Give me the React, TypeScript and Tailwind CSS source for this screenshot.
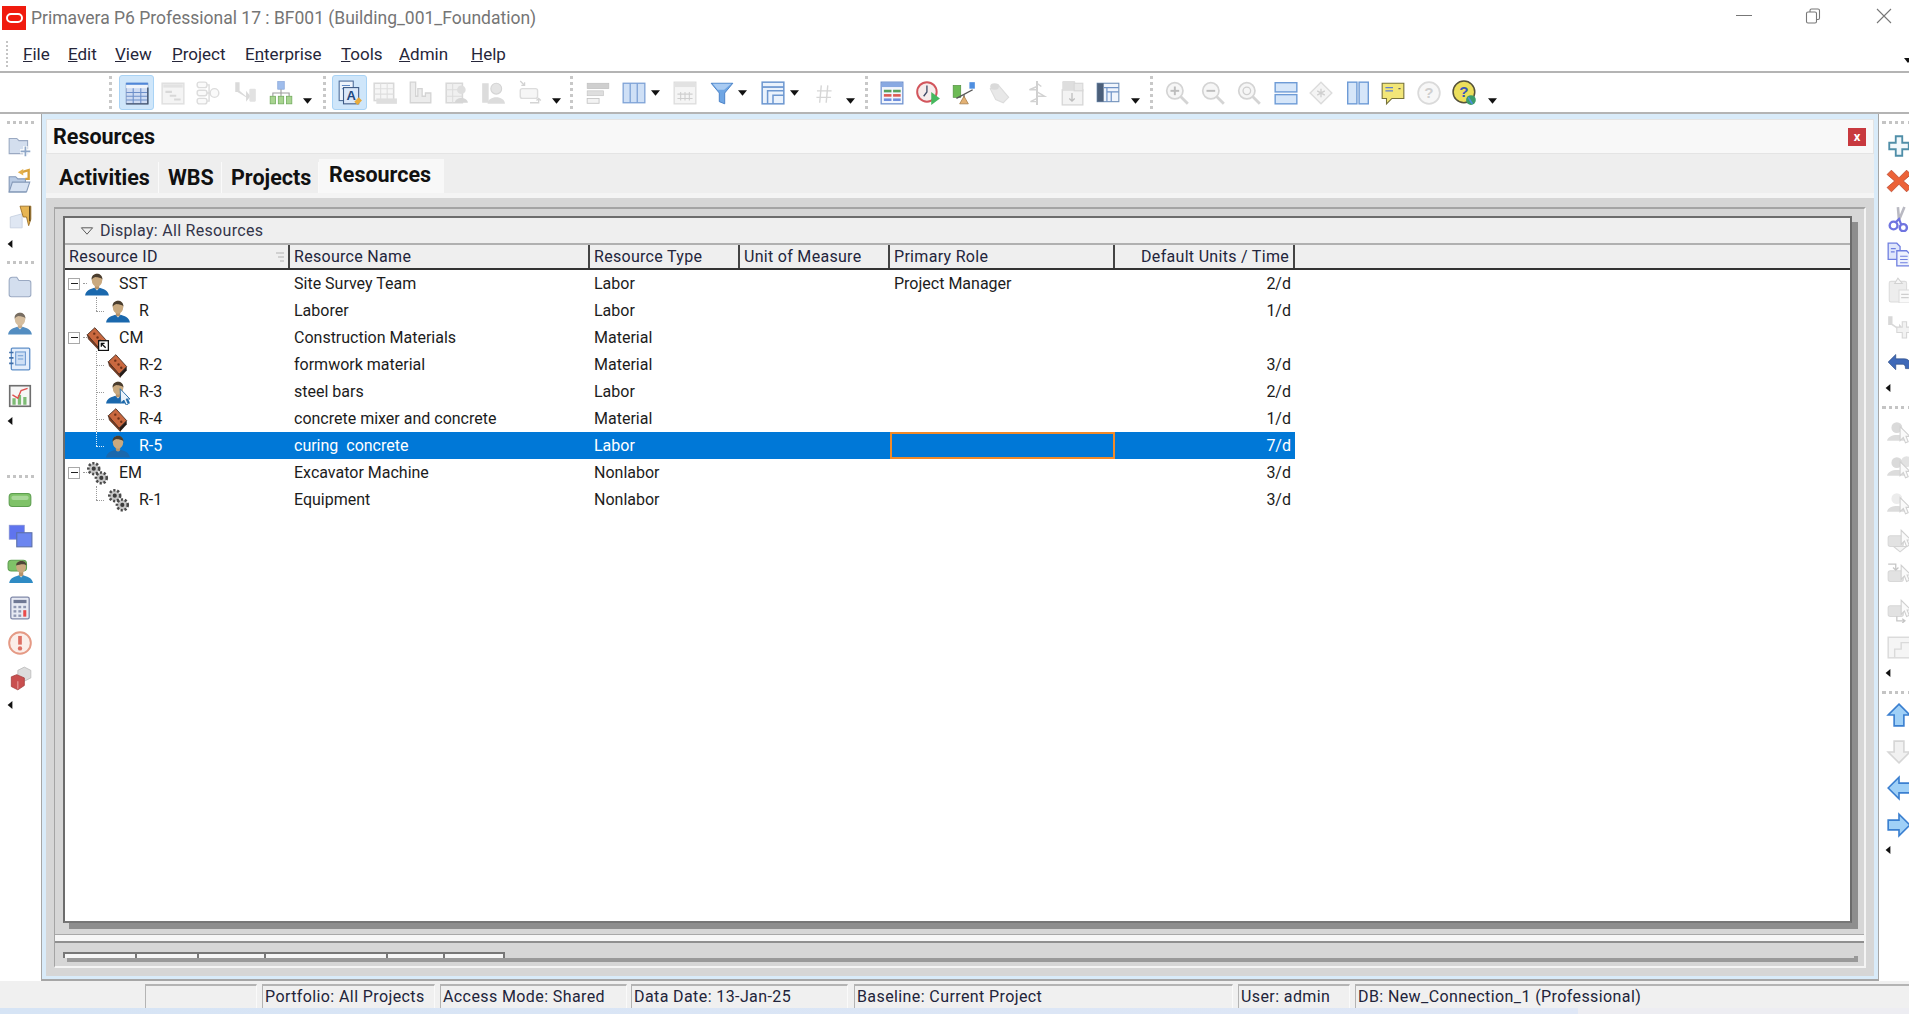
import type { ReactNode } from 'react'

const Ic = ({ children }: { children: ReactNode }) => (
  <svg viewBox="0 0 24 24" className="block h-[26px] w-[26px] shrink-0">
    {children}
  </svg>
)

// tree + sidebar icons
const Person = () => (
  <Ic>
    <rect x="10" y="12" width="4" height="5" fill="#b8946a" />
    <ellipse cx="12" cy="8.5" rx="4.8" ry="6" fill="#c9a97f" />
    <path d="M7.1 8C6 1.5 17 0 17.1 8 15.5 5.5 13 6.5 11 5.5 9.5 5.5 8.2 6.5 7.1 8Z" fill="#4a3d2e" />
    <path d="M1 22.5C1.5 18 6.5 16.5 9.5 15.5L12 18 14.5 15.5C17.5 16.5 22.5 18 23 22.5Z" fill="#1a68ad" />
  </Ic>
)
const PersonCursor = () => (
  <Ic>
    <rect x="10" y="12" width="4" height="5" fill="#b8946a" />
    <ellipse cx="12" cy="8.5" rx="4.8" ry="6" fill="#c9a97f" />
    <path d="M7.1 8C6 1.5 17 0 17.1 8 15.5 5.5 13 6.5 11 5.5 9.5 5.5 8.2 6.5 7.1 8Z" fill="#4a3d2e" />
    <path d="M1 22.5C1.5 18 6.5 16.5 9.5 15.5L12 18 14.5 15.5C17.5 16.5 22.5 18 23 22.5Z" fill="#1a68ad" />
    <path d="M14 9L23 18.5H19.5L21.5 23 19.5 24 17.5 19.5 14.5 22Z" fill="#eaf3fb" stroke="#2a6fa8" strokeWidth="0.9" />
  </Ic>
)
const Brick = ({ link }: { link?: boolean }) => (
  <Ic>
    <path d="M3 9L10 2.5 20 13.5 13 20.5Z" fill="#c9683f" stroke="#40261a" strokeWidth="0.8" />
    <path d="M13 20.5L20 13.5V17L14 23.5Z" fill="#241a16" />
    <path d="M3 9L13 20.5 14 23.5 4 13Z" fill="#7a3c20" stroke="#40261a" strokeWidth="0.5" />
    <circle cx="9.5" cy="8" r="1.1" fill="#6f3218" />
    <circle cx="12.5" cy="11.5" r="1.1" fill="#6f3218" />
    <circle cx="15" cy="14.5" r="1.1" fill="#6f3218" />
    {link && (
      <g>
        <rect x="13.5" y="14.5" width="9" height="9" fill="#fff" stroke="#111" strokeWidth="1.2" />
        <path d="M20 21L16 17M16 20V17H19" fill="none" stroke="#111" strokeWidth="1.2" />
      </g>
    )}
  </Ic>
)
const Gears = () => (
  <Ic>
    <g fill="#c6c6c6" stroke="#4a4a4a">
      <circle cx="9" cy="8" r="5" strokeWidth="2.4" strokeDasharray="2 1.6" />
      <circle cx="16" cy="16.5" r="5" strokeWidth="2.4" strokeDasharray="2 1.6" />
    </g>
    <circle cx="9" cy="8" r="1.9" fill="#3c3c3c" />
    <circle cx="16" cy="16.5" r="1.9" fill="#3c3c3c" />
  </Ic>
)

// top toolbar
const TableOn = () => (
  <Ic>
    <rect x="2" y="3" width="20" height="19" fill="#cfdcf3" stroke="#7d93bd" strokeWidth="0.8" />
    <rect x="2" y="2.5" width="20" height="2" fill="#4f86d8" />
    <rect x="2" y="4.5" width="20" height="3" fill="#eef3fb" />
    <path d="M2 11.5H22M2 15H22M2 18.5H22M8.5 7.5V22M15.5 7.5V22" stroke="#6d8fc9" strokeWidth="1" />
    <path d="M2 22H22V7" fill="none" stroke="#46566f" strokeWidth="1.3" />
  </Ic>
)
const GanttOff = () => (
  <Ic>
    <rect x="2" y="3" width="20" height="19" fill="#f4f4f4" stroke="#e0e0e0" strokeWidth="1.4" />
    <rect x="3" y="4" width="18" height="3" fill="#e2e2e2" />
    <path d="M5 11H11M9 14.5H15M13 18H19" stroke="#d8d8d8" strokeWidth="2" />
  </Ic>
)
const NodesOff = () => (
  <Ic>
    <g fill="#fafafa" stroke="#dcdcdc" strokeWidth="1.3">
      <rect x="2" y="2" width="9" height="5" rx="2" />
      <rect x="2" y="9.5" width="9" height="5" rx="2" />
      <rect x="2" y="17" width="9" height="5" rx="2" />
      <circle cx="18" cy="12" r="4" />
      <path d="M11 4.5H13V19.5H11M11 12H14" fill="none" />
    </g>
  </Ic>
)
const LinkOff = () => (
  <Ic>
    <path d="M3 2H7V10L13 15V10L17 15 13 20V16L5 11H3Z" fill="#dadada" />
    <rect x="16" y="8" width="6" height="12" rx="1" fill="#e2e2e2" />
  </Ic>
)
const Org = () => (
  <Ic>
    <rect x="9" y="1.5" width="6" height="7" fill="#9fbdec" stroke="#7f9fd6" strokeWidth="0.6" />
    <path d="M12 8.5V12M4.5 15V12H19.5V15M12 12V15" fill="none" stroke="#9c9c9c" />
    <g fill="#a8d490" stroke="#6fa95a" strokeWidth="0.7">
      <rect x="2" y="15" width="5" height="7" />
      <rect x="9.5" y="15" width="5" height="7" />
      <rect x="17" y="15" width="5" height="7" />
    </g>
  </Ic>
)
const DocA = () => (
  <Ic>
    <rect x="2" y="1" width="13" height="18" fill="#eef4fc" stroke="#4f6d99" />
    <path d="M4.5 5H12M4.5 8H8" stroke="#5f88c4" />
    <rect x="6" y="7" width="14" height="15" fill="#dbe8f9" stroke="#3d5a85" />
    <text x="13" y="18.5" textAnchor="middle" fontSize="12" fontWeight="700" fontFamily="Liberation Sans, sans-serif" fill="#21477e">A</text>
    <path d="M16 20L20 16 23 19 19 23Z" fill="#e8ab3a" />
  </Ic>
)
const PrintOff = () => (
  <Ic>
    <rect x="2" y="3" width="18" height="16" fill="#f6f6f6" stroke="#d8d8d8" strokeWidth="1.4" />
    <path d="M2 8H20M2 13H20M8 3V19M14 3V19" stroke="#dedede" />
    <rect x="4" y="17" width="19" height="5" fill="#dedede" />
  </Ic>
)
const BarsOff = () => (
  <Ic>
    <path d="M3 2H8V15H10V8H14V15H17V12H22V21H3Z" fill="#ececec" stroke="#d4d4d4" strokeWidth="1.2" />
  </Ic>
)
const TablePersonOff = () => (
  <Ic>
    <rect x="2" y="3" width="15" height="18" fill="#f0f0f0" stroke="#d8d8d8" strokeWidth="1.4" />
    <path d="M2 9H17M2 15H17M8 3V21" stroke="#dcdcdc" />
    <circle cx="16" cy="9" r="4" fill="#dedede" />
    <path d="M10 21C10 15 22 15 22 21Z" fill="#d6d6d6" />
  </Ic>
)
const BarPersonOff = () => (
  <Ic>
    <rect x="2" y="3" width="6" height="18" fill="#dcdcdc" />
    <circle cx="15" cy="8" r="5" fill="#e4e4e4" stroke="#d4d4d4" />
    <path d="M7 22C7 14 23 14 23 22Z" fill="#dcdcdc" />
  </Ic>
)
const BoxArrowsOff = () => (
  <Ic>
    <path d="M3 1L7 5M7 2V5H4" fill="none" stroke="#d2d2d2" strokeWidth="1.2" />
    <rect x="3" y="8" width="16" height="9" rx="2" fill="#f6f6f6" stroke="#dcdcdc" strokeWidth="1.3" />
    <path d="M12 21H20V17M18 19L20 17 22 19" fill="none" stroke="#d4d4d4" strokeWidth="1.2" />
  </Ic>
)
const Align = () => (
  <Ic>
    <rect x="2" y="3" width="20" height="5" fill="#cfcfcf" stroke="#bdbdbd" strokeWidth="0.6" />
    <rect x="2" y="10" width="15" height="4.5" fill="#dedede" stroke="#c4c4c4" strokeWidth="0.6" />
    <rect x="2" y="17" width="11" height="4.5" fill="#f3f3f3" stroke="#c4c4c4" strokeWidth="0.8" />
  </Ic>
)
const Columns = () => (
  <Ic>
    <rect x="2" y="3" width="20" height="18" fill="#cfe0f6" stroke="#7ea2d6" strokeWidth="1.2" />
    <path d="M8.5 3V21M15 3V21" stroke="#7ea2d6" strokeWidth="1.2" />
  </Ic>
)
const CalendarOff = () => (
  <Ic>
    <rect x="2" y="2" width="20" height="20" fill="#f5f5f5" stroke="#dcdcdc" strokeWidth="1.2" />
    <rect x="2.5" y="2.5" width="19" height="4" fill="#e2e2e2" />
    <path d="M5 13H19M5 17H19M8 11V19M12 11V19M16 11V19" stroke="#cfcfcf" />
  </Ic>
)
const Funnel = () => (
  <Ic>
    <path d="M2 3H22L14.5 12V22L9.5 20V12Z" fill="#6fa6e4" stroke="#3f78c2" strokeWidth="0.8" />
    <path d="M3.5 3.5H20.5L14 9H8Z" fill="#a9cbf2" />
  </Ic>
)
const Layers = () => (
  <Ic>
    <rect x="2" y="2" width="20" height="20" fill="#eaf2fc" stroke="#6d97d0" strokeWidth="1.4" />
    <path d="M2 6.5H22" stroke="#6d97d0" strokeWidth="1.6" />
    <path d="M7 22V10H22" fill="none" stroke="#6d97d0" strokeWidth="1.4" />
    <path d="M12 22V14H22" fill="none" stroke="#6d97d0" strokeWidth="1.4" />
  </Ic>
)
const HashOff = () => (
  <Ic>
    <path d="M9.5 5L8 21M15.5 5L14 21M5.5 10H19M5 16H18.5" stroke="#d6d6d6" strokeWidth="1.3" />
  </Ic>
)
const ColorTable = () => (
  <Ic>
    <rect x="2" y="2" width="20" height="20" fill="#f2f6fd" stroke="#6f92cf" strokeWidth="1.2" />
    <rect x="2.5" y="2.5" width="19" height="4" fill="#88a9e2" />
    <rect x="4.5" y="9" width="7" height="2.4" fill="#57a05a" />
    <rect x="13" y="9" width="7" height="2.4" fill="#57a05a" />
    <rect x="4.5" y="13" width="7" height="2.4" fill="#dc5a52" />
    <rect x="13" y="13" width="7" height="2.4" fill="#dc5a52" />
    <rect x="4.5" y="17" width="7" height="2.4" fill="#6f8fdc" />
    <rect x="13" y="17" width="7" height="2.4" fill="#6f8fdc" />
  </Ic>
)
const ClockPlay = () => (
  <Ic>
    <circle cx="11" cy="11" r="9" fill="#f6ecec" stroke="#d2555c" strokeWidth="1.8" />
    <path d="M11 5V11L8 15" fill="none" stroke="#3d4a66" strokeWidth="1.2" />
    <path d="M15 11L23 17 15 23Z" fill="#46b85e" />
  </Ic>
)
const Level = () => (
  <Ic>
    <rect x="2" y="5" width="7" height="11" fill="#6dbb55" stroke="#4f8d3d" strokeWidth="0.6" />
    <rect x="17" y="2" width="5" height="6" fill="#4f8fe0" />
    <path d="M5 17L20 9" stroke="#555" strokeWidth="1.3" />
    <path d="M12 13V18" stroke="#666" strokeWidth="1.3" />
    <path d="M8 22L12 15 16 22Z" fill="#e3b173" stroke="#a37a45" strokeWidth="0.7" />
  </Ic>
)
const CylOff = () => (
  <Ic>
    <path d="M3 8L10 4 20 16 15 21 8 18Z" fill="#e8e8e8" stroke="#dcdcdc" />
    <ellipse cx="7" cy="6" rx="4" ry="3" fill="#dadada" />
  </Ic>
)
const SpineOff = () => (
  <Ic>
    <path d="M12 1V23" stroke="#c9c9c9" strokeWidth="1.6" />
    <path d="M12 6L5 9H12M12 11L19 15H12M12 17L6 20H12M12 3L16 6" fill="none" stroke="#d2d2d2" strokeWidth="1.3" />
  </Ic>
)
const StoreOff = () => (
  <Ic>
    <rect x="3" y="9" width="19" height="14" fill="#f3f3f3" stroke="#d6d6d6" strokeWidth="1.2" />
    <rect x="3" y="1" width="12" height="9" rx="1" fill="#dedede" />
    <rect x="14" y="3" width="8" height="7" fill="#e8e8e8" stroke="#d6d6d6" />
    <path d="M12 12V19M9.5 17L12 19.5 14.5 17" fill="none" stroke="#bdbdbd" strokeWidth="1.2" />
  </Ic>
)
const DarkPanel = () => (
  <Ic>
    <rect x="2" y="3" width="20" height="17" fill="#f0f5fc" stroke="#6f8fb8" />
    <rect x="2" y="3" width="6" height="17" fill="#4b5f7a" />
    <path d="M8 7H22M11 7V20M11 11H22M15 11V20" fill="none" stroke="#6f93c6" strokeWidth="1.1" />
  </Ic>
)
const Lens = ({ kind }: { kind: 'in' | 'out' | 'fit' }) => (
  <Ic>
    <circle cx="10" cy="10" r="7.5" fill="#f6f6f6" stroke="#d4d4d4" strokeWidth="1.6" />
    <path d="M15.5 15.5L22 22" stroke="#d4d4d4" strokeWidth="2.6" />
    {kind !== 'fit' && <path d="M6 10H14" stroke="#bdbdbd" strokeWidth="1.8" />}
    {kind === 'in' && <path d="M10 6V14" stroke="#bdbdbd" strokeWidth="1.8" />}
    {kind === 'fit' && <circle cx="10" cy="10" r="3.5" fill="none" stroke="#cfcfcf" strokeWidth="1.2" />}
  </Ic>
)
const TwoRows = () => (
  <Ic>
    <rect x="2" y="2.5" width="20" height="8.5" fill="#d6e6f9" stroke="#6e9bd6" strokeWidth="1.3" />
    <rect x="2" y="13.5" width="20" height="8.5" fill="#d6e6f9" stroke="#6e9bd6" strokeWidth="1.3" />
  </Ic>
)
const DiamondOff = () => (
  <Ic>
    <path d="M12 2L22 12 12 22 2 12Z" fill="#f4f4f4" stroke="#dcdcdc" strokeWidth="1.3" />
    <path d="M12 8V16M8.5 10L15.5 14M15.5 10L8.5 14" stroke="#cfcfcf" strokeWidth="1.2" />
  </Ic>
)
const TwoCols = () => (
  <Ic>
    <rect x="2.5" y="2" width="8.5" height="20" fill="#d6e6f9" stroke="#6e9bd6" strokeWidth="1.3" />
    <rect x="13" y="2" width="8.5" height="20" fill="#d6e6f9" stroke="#6e9bd6" strokeWidth="1.3" />
  </Ic>
)
const Bubble = () => (
  <Ic>
    <path d="M2 3H22V17H11L6 22V17H2Z" fill="#f2e678" stroke="#75713a" strokeWidth="1" />
    <path d="M5 7H12M5 10H12" stroke="#5f7fd0" strokeWidth="1.2" />
    <path d="M17 8H19" stroke="#555" />
  </Ic>
)
const HelpOff = () => (
  <Ic>
    <circle cx="12" cy="12" r="10" fill="#f7f7f7" stroke="#dadada" strokeWidth="1.6" />
    <text x="12" y="17" textAnchor="middle" fontSize="14" fontWeight="700" fontFamily="Liberation Sans, sans-serif" fill="#cfcfcf">?</text>
  </Ic>
)
const HelpWeb = () => (
  <Ic>
    <circle cx="11" cy="11" r="10" fill="#ecdf5c" stroke="#55523a" strokeWidth="1.4" />
    <text x="11" y="16" textAnchor="middle" fontSize="14" fontWeight="700" fontFamily="Liberation Sans, sans-serif" fill="#3a57b8">?</text>
    <circle cx="17.5" cy="18.5" r="4.5" fill="#3c9c6a" />
    <path d="M15 16C17 18 17 21 19 22" stroke="#4d8fe0" strokeWidth="1.5" fill="none" />
  </Ic>
)

// left bar
const FolderPlus = () => (
  <Ic>
    <path d="M2 5H9L11 7H19V19H2Z" fill="#d3deee" stroke="#9aa9c2" />
    <path d="M17 12V22M12 17H22" stroke="#fff" strokeWidth="4" />
    <path d="M17 12.5V21.5M12.5 17H21.5" stroke="#8fa7c7" strokeWidth="1.6" />
  </Ic>
)
const FolderOpen = () => (
  <Ic>
    <path d="M2 8H8L10 10H17V22H2Z" fill="#b9cbe4" stroke="#8499b8" />
    <path d="M2 22L5 13H21L18 22Z" fill="#d6e2f2" stroke="#8499b8" />
    <path d="M13 4L20 2V10H17" fill="none" stroke="#d8a13a" strokeWidth="2.2" />
    <path d="M10 4L15 1V7Z" fill="#e4b04c" />
  </Ic>
)
const DocArrow = () => (
  <Ic>
    <path d="M3 12L14 9V22H3Z" fill="#dfe7f3" stroke="#c1cbdc" strokeWidth="0.7" />
    <path d="M12 2H22V14L20 20 18 12H15Z" fill="#e7b553" stroke="#9a6d24" strokeWidth="0.8" />
    <path d="M21 2V16" stroke="#514020" strokeWidth="1.2" />
  </Ic>
)
const Folder = () => (
  <Ic>
    <path d="M2 6C2 4 3 3 5 3H9L11 6H20C21.5 6 22 7 22 8V19C22 20.5 21 21 20 21H4C3 21 2 20.5 2 19Z" fill="#d3deee" stroke="#9aa9c2" strokeWidth="1" />
  </Ic>
)
const Notebook = () => (
  <Ic>
    <rect x="4" y="2" width="17" height="20" rx="1" fill="#e4eefb" stroke="#5f8fc8" strokeWidth="1.2" />
    <rect x="8" y="5.5" width="9" height="12" fill="#cfe0f5" stroke="#6f9bd2" />
    <path d="M10 9H15M10 12H15" stroke="#6f9bd2" />
    <path d="M2 6H6M2 11H6M2 16H6" stroke="#3f6ea8" strokeWidth="1.6" />
  </Ic>
)
const ChartBox = () => (
  <Ic>
    <rect x="2.5" y="2.5" width="19" height="19" fill="#f6f6f6" stroke="#6e6e6e" strokeWidth="1.5" />
    <path d="M5 20V14H8V20ZM10 20V11H13V20ZM15 20V13H18V20Z" fill="#7dbb74" />
    <path d="M5 11L10 14 13 7 19 5" fill="none" stroke="#e0504f" strokeWidth="1.3" />
  </Ic>
)
const GreenBar = () => (
  <Ic>
    <rect x="2" y="6" width="20" height="12" rx="3" fill="#7fc268" stroke="#5e9f50" strokeWidth="1" />
    <rect x="4" y="8" width="16" height="4" rx="2" fill="#a9d899" />
  </Ic>
)
const BlueSquares = () => (
  <Ic>
    <rect x="2" y="2" width="14" height="13" fill="#5f74ee" stroke="#8a93cf" strokeWidth="0.6" />
    <rect x="9" y="9" width="14" height="13" fill="#6c86f0" stroke="#5c6fa8" strokeWidth="1" />
  </Ic>
)
const GreenPerson = () => (
  <Ic>
    <rect x="1" y="2" width="17" height="10" rx="3" fill="#7fc268" stroke="#5e9f50" />
    <rect x="11" y="12" width="4" height="5" fill="#b8946a" />
    <ellipse cx="13" cy="8" rx="4.5" ry="5.5" fill="#c9a97f" />
    <path d="M8.5 7C8 2 18 1 18 7 16 5 12 6 8.5 7Z" fill="#4e4637" />
    <path d="M2 23C3 18 8 17 11 16L13 18 15 16C18 17 23 18 24 23Z" fill="#2f8bc4" />
  </Ic>
)
const Calc = () => (
  <Ic>
    <rect x="3.5" y="2" width="17" height="20" rx="1.5" fill="#e7eaf3" stroke="#7f88a8" strokeWidth="1.2" />
    <rect x="6" y="4.5" width="12" height="3" fill="#6f7894" />
    <g fill="#8f97b2">
      <rect x="6" y="10" width="2.6" height="2.2" />
      <rect x="10.5" y="10" width="2.6" height="2.2" />
      <rect x="6" y="14" width="2.6" height="2.2" />
      <rect x="10.5" y="14" width="2.6" height="2.2" />
      <rect x="6" y="18" width="2.6" height="2.2" />
      <rect x="10.5" y="18" width="2.6" height="2.2" />
      <rect x="15" y="10" width="2.6" height="2.2" />
    </g>
    <rect x="15" y="14" width="2.8" height="6" fill="#ea4b4b" />
  </Ic>
)
const Alert = () => (
  <Ic>
    <circle cx="12" cy="12" r="10" fill="#fbeee9" stroke="#e59a85" strokeWidth="1.8" />
    <rect x="10.3" y="5.5" width="3.4" height="8" fill="#dd6f63" />
    <circle cx="12" cy="17" r="2" fill="#dd6f63" />
  </Ic>
)
const Dice = () => (
  <Ic>
    <path d="M10 4L16 1 22 4V11L16 14 10 11Z" fill="#dcdcdc" stroke="#b8b8b8" strokeWidth="0.7" />
    <path d="M4 10L9 8 16 11V18L10 22 4 19Z" fill="#c94f4f" stroke="#a23a3a" strokeWidth="0.7" />
    <path d="M10 14V21" stroke="#e7a0a0" />
  </Ic>
)

// right bar
const Plus = () => (
  <Ic>
    <path d="M9 3H15V9H21V15H15V21H9V15H3V9H9Z" fill="#f1f8fc" stroke="#4f8ea8" strokeWidth="1.7" />
  </Ic>
)
const RedX = () => (
  <Ic>
    <path d="M5 2L12 9 19 2 23 6 16 12 23 18 19 22 12 15 5 22 1 18 8 12 1 6Z" fill="#ec6238" stroke="#b5442c" strokeWidth="0.7" />
  </Ic>
)
const Scissors = () => (
  <Ic>
    <path d="M17 1L12 13M11 1L12 13" stroke="#b9b9c2" strokeWidth="2.4" />
    <circle cx="7" cy="18" r="3.6" fill="none" stroke="#6f74e0" strokeWidth="2.2" />
    <circle cx="16" cy="20" r="3.3" fill="none" stroke="#6f74e0" strokeWidth="2.2" />
    <path d="M9 15L12 12 14 17" fill="none" stroke="#6f74e0" strokeWidth="2" />
  </Ic>
)
const CopyDocs = () => (
  <Ic>
    <path d="M2 2H10L13 5V17H2Z" fill="#dfe6fb" stroke="#6f7fe0" strokeWidth="1.2" />
    <path d="M10 9H19L23 13V23H10Z" fill="#eef2fd" stroke="#6f7fe0" strokeWidth="1.2" />
    <path d="M4.5 7H9M4.5 10H8M13 14H20M13 17H20M13 20H20" stroke="#6f7fe0" />
  </Ic>
)
const PasteOff = () => (
  <Ic>
    <rect x="3" y="4" width="16" height="19" rx="1.5" fill="#ededed" stroke="#dcdcdc" />
    <path d="M8 6L11 1 15 6Z" fill="#f6f6f6" stroke="#d2d2d2" />
    <rect x="12" y="12" width="12" height="12" fill="#fafafa" stroke="#dcdcdc" />
    <path d="M14 16H21M14 19H21" stroke="#cfcfcf" />
  </Ic>
)
const LinkPlusOff = () => (
  <Ic>
    <path d="M2 3H6V10L12 14V10L14 12V17L5 11H2Z" fill="#d8d8d8" />
    <path d="M15 8H19V13H24V18H19V23H15V18H10V13H15Z" fill="#f2f2f2" stroke="#d6d6d6" />
  </Ic>
)
const Undo = () => (
  <Ic>
    <path d="M2 13L9 6V10H17C21 10 23 13 23 19H18C18 16 17 15 15 15H9V20Z" fill="#3f69b8" stroke="#27477f" strokeWidth="0.6" />
  </Ic>
)
const PersonCursorOff = ({ two, hollow }: { two?: boolean; hollow?: boolean }) => (
  <Ic>
    {two && <circle cx="19" cy="7" r="5" fill="#e2e2e2" />}
    <circle cx="10" cy="8" r="5" fill={hollow ? '#ececec' : '#dadada'} />
    <path d="M1 20C2 13 18 13 19 20Z" fill="#dcdcdc" />
    <path d="M13 7L22 16H18.5L20.5 21 18 22 16 17 13 20Z" fill="#fafafa" stroke="#d0d0d0" />
  </Ic>
)
const BoxCursorOff = ({ mode }: { mode: 'down' | 'top' | 'elbow' }) => (
  <Ic>
    <rect x="2" y="8" width="14" height="10" rx="2" fill="#e2e2e2" stroke="#d8d8d8" />
    {mode === 'down' && <path d="M7 18L13 23 19 18Z" fill="#f5f5f5" stroke="#d4d4d4" />}
    {mode === 'top' && <path d="M2 2H9V7M6.5 5L9 7.5 11.5 5" fill="none" stroke="#c6c6c6" strokeWidth="1.2" />}
    {mode === 'elbow' && <path d="M10 18V22H17M15 20L17.5 22 15 24" fill="none" stroke="#c6c6c6" strokeWidth="1.2" />}
    <path d="M14 3L23 12H19.5L21.5 17 19 18 17 13 14 16Z" fill="#fafafa" stroke="#d0d0d0" />
  </Ic>
)
const StepsOff = () => (
  <Ic>
    <rect x="2" y="3" width="21" height="19" fill="#f5f5f5" stroke="#dadada" strokeWidth="1.3" />
    <path d="M8 22V14H14V8H23" fill="none" stroke="#dadada" strokeWidth="1.3" />
  </Ic>
)
const BlockArrow = ({ dir, on }: { dir: 'up' | 'down' | 'left' | 'right'; on?: boolean }) => {
  const d = {
    up: 'M12 2L22 12H16.5V22H7.5V12H2Z',
    down: 'M12 22L22 12H16.5V2H7.5V12H2Z',
    left: 'M2 12L12 2V7.5H22V16.5H12V22Z',
    right: 'M22 12L12 2V7.5H2V16.5H12V22Z',
  }[dir]
  return (
    <Ic>
      <path d={d} fill={on ? '#9fd0f7' : '#f1f1f1'} stroke={on ? '#3a7fd0' : '#d6d6d6'} strokeWidth="1.5" />
    </Ic>
  )
}

const Grip = ({ c }: { c: string }) => <div className={`h-[33px] w-[4px] shrink-0 border-l-[3px] border-dotted border-[#c8c8c8] ${c}`} />
const HGrip = ({ c }: { c: string }) => <div className={`h-[3px] border-t-[3px] border-dotted border-[#c4c4c4] ${c}`} />
const Drop = ({ c, mid }: { c: string; mid?: boolean }) => (
  <div className={`flex w-[10px] shrink-0 justify-center ${mid ? 'self-center' : 'mt-[17px] self-center'} ${c}`}>
    <svg viewBox="0 0 10 6" className="h-[6px] w-[9px]">
      <path d="M0 0H10L5 6Z" fill="#111" />
    </svg>
  </div>
)
const Tb = ({ c, children }: { c: string; children: ReactNode }) => <div className={`shrink-0 ${c}`}>{children}</div>
const On = ({ c, children }: { c: string; children: ReactNode }) => (
  <div className={`flex h-[35px] w-[35px] shrink-0 items-center justify-center rounded-[3px] border border-[#a9d3f5] bg-[#cfe6fa] ${c}`}>{children}</div>
)
const SideArrow = ({ c }: { c: string }) => (
  <svg viewBox="0 0 6 10" className={`block h-[8px] w-[6px] ${c}`}>
    <path d="M6 0V10L0 5Z" fill="#111" />
  </svg>
)
const Sb = ({ c, children }: { c: string; children: ReactNode }) => <div className={c}>{children}</div>

const Minus = () => (
  <span className="flex h-[12px] w-[12px] shrink-0 items-center justify-center border border-[#a8a8a8] bg-white">
    <span className="h-[1.5px] w-[7px] bg-[#222]" />
  </span>
)

interface Row {
  id: string
  name: string
  type: string
  role?: string
  units?: string
  icon: ReactNode
  child?: boolean
  line?: 'mid' | 'end'
  selected?: boolean
}

const rows: Row[] = [
  { id: 'SST', name: 'Site Survey Team', type: 'Labor', role: 'Project Manager', units: '2/d', icon: <Person /> },
  { id: 'R', name: 'Laborer', type: 'Labor', units: '1/d', icon: <Person />, child: true, line: 'end' },
  { id: 'CM', name: 'Construction Materials', type: 'Material', icon: <Brick link /> },
  { id: 'R-2', name: 'formwork material', type: 'Material', units: '3/d', icon: <Brick />, child: true, line: 'mid' },
  { id: 'R-3', name: 'steel bars', type: 'Labor', units: '2/d', icon: <PersonCursor />, child: true, line: 'mid' },
  { id: 'R-4', name: 'concrete mixer and concrete', type: 'Material', units: '1/d', icon: <Brick />, child: true, line: 'mid' },
  { id: 'R-5', name: 'curing  concrete', type: 'Labor', units: '7/d', icon: <Person />, child: true, line: 'end', selected: true },
  { id: 'EM', name: 'Excavator Machine', type: 'Nonlabor', units: '3/d', icon: <Gears /> },
  { id: 'R-1', name: 'Equipment', type: 'Nonlabor', units: '3/d', icon: <Gears />, child: true, line: 'end' },
]

const menus = [
  ['F', 'ile', '', 'w-[45px]'],
  ['E', 'dit', '', 'w-[47px]'],
  ['V', 'iew', '', 'w-[57px]'],
  ['P', 'roject', '', 'w-[73px]'],
  ['n', 'terprise', 'E', 'w-[96px]'],
  ['T', 'ools', '', 'w-[58px]'],
  ['A', 'dmin', '', 'w-[72px]'],
  ['H', 'elp', '', 'w-[50px]'],
]

const StatusCell = ({ c, children }: { c: string; children?: ReactNode }) => (
  <div className={`flex h-full shrink-0 items-center truncate border-l border-t-2 border-r border-l-[#b4b4b4] border-t-[#b4b4b4] border-r-[#fafafa] pl-[2px] text-[16px] tracking-[0.4px] text-[#22243a] ${c}`}>
    {children}
  </div>
)

const HeadCell = ({ c, children }: { c: string; children?: ReactNode }) => (
  <div className={`flex h-full shrink-0 items-center border-r-2 border-[#444] text-[16px] tracking-[0.3px] text-[#23253c] ${c}`}>{children}</div>
)

export default function App() {
  return (
    <div className="flex h-[1014px] w-[1909px] flex-col overflow-hidden bg-white font-['Roboto',sans-serif]">
      {/* title bar */}
      <div className="flex h-[36px] shrink-0 items-center">
        <div className="ml-[2px] flex h-[24px] w-[24px] items-center justify-center bg-[#f01b0e]">
          <div className="h-[10px] w-[17px] rounded-[5px] border-2 border-white" />
        </div>
        <div className="ml-[5px] mt-[1px] text-[17.5px] text-[#757575]">Primavera P6 Professional 17 : BF001 (Building_001_Foundation)</div>
        <div className="ml-auto flex items-center">
          <div className="mb-[5px] h-[1px] w-[16px] bg-[#777]" />
          <svg viewBox="0 0 16 16" className="mb-[5px] ml-[53px] h-[16px] w-[16px]" fill="none" stroke="#777" strokeWidth="1.1">
            <rect x="1.5" y="4" width="10" height="11" rx="1.5" />
            <path d="M5 4V2.5C5 1.5 5.5 1 6.5 1H13C14 1 14.5 1.5 14.5 2.5V10C14.5 11 14 11.5 13 11.5H11.5" />
          </svg>
          <svg viewBox="0 0 16 16" className="mb-[5px] ml-[55px] mr-[17px] h-[16px] w-[16px]" fill="none" stroke="#777" strokeWidth="1.1">
            <path d="M1 1L15 15M15 1L1 15" />
          </svg>
        </div>
      </div>
      {/* menu */}
      <div className="flex h-[35px] shrink-0 items-center">
        <div className="ml-[6px] h-[26px] w-[3px] border-l-[2px] border-dotted border-[#c4c4c4]" />
        <div className="ml-[14px] mt-[3px] flex text-[17px] text-[#26263a]">
          {menus.map(([u, rest, pre, w]) => (
            <div key={rest} className={w}>
              {pre}
              <span className="underline">{u}</span>
              {rest}
            </div>
          ))}
        </div>
        <svg viewBox="0 0 10 6" className="ml-auto mr-[-3px] mt-[14px] h-[5px] w-[8px]">
          <path d="M0 0H10L5 6Z" fill="#111" />
        </svg>
      </div>
      {/* toolbar */}
      <div className="flex h-[43px] shrink-0 items-center border-y-2 border-[#b4b4b4] pl-[109px]">
        <Grip c="" />
        <On c="ml-[6px]"><TableOn /></On>
        <Tb c="ml-[6px]"><GanttOff /></Tb>
        <Tb c="ml-[9px]"><NodesOff /></Tb>
        <Tb c="ml-[11px]"><LinkOff /></Tb>
        <Tb c="ml-[10px]"><Org /></Tb>
        <Drop c="ml-[8px]" />
        <Grip c="ml-[11px]" />
        <On c="ml-[5px]"><DocA /></On>
        <Tb c="ml-[5px]"><PrintOff /></Tb>
        <Tb c="ml-[9px]"><BarsOff /></Tb>
        <Tb c="ml-[11px]"><TablePersonOff /></Tb>
        <Tb c="ml-[10px]"><BarPersonOff /></Tb>
        <Tb c="ml-[11px]"><BoxArrowsOff /></Tb>
        <Drop c="ml-[8px]" />
        <Grip c="ml-[9px]" />
        <Tb c="ml-[11px]"><Align /></Tb>
        <Tb c="ml-[10px]"><Columns /></Tb>
        <Drop c="ml-[3px]" mid />
        <Tb c="ml-[12px]"><CalendarOff /></Tb>
        <Tb c="ml-[11px]"><Funnel /></Tb>
        <Drop c="ml-[2px]" mid />
        <Tb c="ml-[13px]"><Layers /></Tb>
        <Drop c="ml-[3px]" mid />
        <Tb c="ml-[12px]"><HashOff /></Tb>
        <Drop c="ml-[8px]" />
        <Grip c="ml-[10px]" />
        <Tb c="ml-[10px]"><ColorTable /></Tb>
        <Tb c="ml-[10px]"><ClockPlay /></Tb>
        <Tb c="ml-[10px]"><Level /></Tb>
        <Tb c="ml-[10px]"><CylOff /></Tb>
        <Tb c="ml-[11px]"><SpineOff /></Tb>
        <Tb c="ml-[9px]"><StoreOff /></Tb>
        <Tb c="ml-[10px]"><DarkPanel /></Tb>
        <Drop c="ml-[9px]" />
        <Grip c="ml-[10px]" />
        <Tb c="ml-[10px]"><Lens kind="in" /></Tb>
        <Tb c="ml-[10px]"><Lens kind="out" /></Tb>
        <Tb c="ml-[10px]"><Lens kind="fit" /></Tb>
        <Tb c="ml-[11px]"><TwoRows /></Tb>
        <Tb c="ml-[9px]"><DiamondOff /></Tb>
        <Tb c="ml-[11px]"><TwoCols /></Tb>
        <Tb c="ml-[9px]"><Bubble /></Tb>
        <Tb c="ml-[10px]"><HelpOff /></Tb>
        <Tb c="ml-[10px]"><HelpWeb /></Tb>
        <Drop c="ml-[9px]" />
      </div>

      <div className="flex min-h-0 flex-1">
        {/* left bar */}
        <div className="w-[41px] shrink-0 pl-[7px]">
          <HGrip c="mt-[7px] w-[27px]" />
          <Sb c="mt-[9px]"><FolderPlus /></Sb>
          <Sb c="mt-[9px]"><FolderOpen /></Sb>
          <Sb c="mt-[10px]"><DocArrow /></Sb>
          <SideArrow c="mt-[10px]" />
          <HGrip c="mt-[13px] w-[27px]" />
          <Sb c="mt-[10px]"><Folder /></Sb>
          <Sb c="mt-[10px] opacity-75"><Person /></Sb>
          <Sb c="mt-[10px]"><Notebook /></Sb>
          <Sb c="mt-[11px]"><ChartBox /></Sb>
          <SideArrow c="mt-[8px]" />
          <HGrip c="mt-[50px] w-[27px]" />
          <Sb c="mt-[9px]"><GreenBar /></Sb>
          <Sb c="mt-[10px]"><BlueSquares /></Sb>
          <Sb c="mt-[9px]"><GreenPerson /></Sb>
          <Sb c="mt-[11px]"><Calc /></Sb>
          <Sb c="mt-[9px]"><Alert /></Sb>
          <Sb c="mt-[10px]"><Dice /></Sb>
          <SideArrow c="mt-[9px]" />
        </div>

        {/* center panel */}
        <div className="flex min-w-0 flex-1 flex-col border-x border-b-2 border-[#a6a6a6] bg-[#d9ebf9] px-[4px] pb-[3px] pt-[5px]">
          <div className="flex h-[35px] shrink-0 items-center justify-between border border-[#e4e4e4] bg-[#f8f8f8] pl-[6px] pr-[7px]">
            <div className="mt-[2px] text-[21.5px] font-bold text-[#111]">Resources</div>
            <div className="flex h-[18px] w-[18px] items-center justify-center bg-[#c8393e] text-[13px] font-bold leading-none text-white">x</div>
          </div>
          <div className="flex h-[39px] shrink-0 items-end bg-[#eeeeee] pl-[4px]">
            <div className="flex h-[31px] w-[109px] items-center border-r border-[#fafafa] pl-[9px] pt-[2px] text-[21.5px] font-bold text-[#111]">Activities</div>
            <div className="flex h-[31px] w-[63px] items-center border-r border-[#fafafa] pl-[9px] pt-[2px] text-[21.5px] font-bold text-[#111]">WBS</div>
            <div className="flex h-[31px] w-[97px] items-center border-r border-[#fafafa] pl-[9px] pt-[2px] text-[21.5px] font-bold text-[#111]">Projects</div>
            <div className="flex h-[34px] w-[125px] items-start bg-[#f8f8f8] pl-[10px] text-[21.5px] font-bold leading-[32px] text-[#111]">Resources</div>
          </div>
          <div className="h-[5px] shrink-0 bg-[#f4f4f4]" />

          {/* gray workspace */}
          <div className="flex min-h-0 flex-1 flex-col bg-[#d6d6d6] px-[8px] pb-[8px] pt-[9px]">
            <div className="flex min-h-0 flex-1 flex-col border-l border-r-2 border-t-2 border-b-2 border-l-[#a4a4a4] border-t-[#a4a4a4] border-b-[#f4f4f4] border-r-[#f4f4f4]">
              <div className="ml-[8px] mr-[12px] mt-[7px] flex h-[707px] shrink-0 flex-col border-2 border-[#6c6c6c] border-b-[#777] bg-white shadow-[6px_6px_0_0_#8e8e8e]">
                <div className="flex h-[25px] shrink-0 items-center bg-[#efefef] pl-[15px] text-[16px] tracking-[0.3px] text-[#33354a]">
                  <svg viewBox="0 0 16 10" className="h-[8px] w-[14px]" fill="none" stroke="#555" strokeWidth="1.2">
                    <path d="M1 1L8 9 15 1Z" />
                  </svg>
                  <span className="ml-[6px]">Display: All Resources</span>
                </div>
                <div className="flex h-[27px] shrink-0 border-y-2 border-t-[#b0b0b0] border-b-[#333] bg-[#efefef]">
                  <HeadCell c="w-[225px] justify-between pl-[4px] pr-[3px]">
                    Resource ID
                    <svg viewBox="0 0 10 12" className="h-[12px] w-[10px]" stroke="#b4b4b4" strokeWidth="1.2">
                      <path d="M1 2H9M3 6H9M5 10H9" />
                    </svg>
                  </HeadCell>
                  <HeadCell c="w-[300px] pl-[4px]">Resource Name</HeadCell>
                  <HeadCell c="w-[150px] pl-[4px]">Resource Type</HeadCell>
                  <HeadCell c="w-[150px] pl-[4px]">Unit of Measure</HeadCell>
                  <HeadCell c="w-[225px] pl-[4px]">Primary Role</HeadCell>
                  <HeadCell c="w-[180px] justify-end pr-[4px]">Default Units / Time</HeadCell>
                </div>
                <div className="min-h-0 flex-1">
                  {rows.map(r => (
                    <div
                      key={r.id}
                      className={`flex h-[27px] w-[1230px] items-center whitespace-pre text-[16px] ${r.selected ? 'bg-[#0078d7] text-white' : 'text-[#1c1c1c]'}`}
                    >
                      <div className="relative flex h-full w-[225px] shrink-0 items-center pl-[3px]">
                        {r.child ? (
                          <>
                            <span className={`absolute left-[31px] top-0 w-0 border-l border-dotted ${r.selected ? 'border-[#d8ecfb]' : 'border-[#9a9a9a]'} ${r.line === 'mid' ? 'h-full' : 'h-1/2'}`} />
                            <span className={`absolute left-[31px] top-1/2 w-[8px] border-t border-dotted ${r.selected ? 'border-[#d8ecfb]' : 'border-[#9a9a9a]'}`} />
                            <span className="ml-[37px]">{r.icon}</span>
                            <span className="ml-[8px]">{r.id}</span>
                          </>
                        ) : (
                          <>
                            <Minus />
                            <span className="ml-[3px] w-[4px] shrink-0 border-t border-dotted border-[#9a9a9a]" />
                            <span className="ml-[-3px]">{r.icon}</span>
                            <span className="ml-[9px]">{r.id}</span>
                          </>
                        )}
                      </div>
                      <div className="w-[300px] shrink-0 pl-[4px]">{r.name}</div>
                      <div className="w-[150px] shrink-0 pl-[4px]">{r.type}</div>
                      <div className="w-[150px] shrink-0" />
                      <div className={`flex h-full w-[225px] shrink-0 items-center pl-[4px] ${r.selected ? 'border-2 border-[#f28a28]' : ''}`}>{r.role}</div>
                      <div className="w-[180px] shrink-0 pr-[4px] text-right">{r.units}</div>
                    </div>
                  ))}
                </div>
              </div>
              <div className="mt-[11px] h-[9px] shrink-0 border-t border-b-2 border-t-[#a8a8a8] border-b-[#8f8f8f] bg-[#f6f6f6]" />
              <div className="relative ml-[8px] mr-[10px] mt-[9px] flex h-[6px] shrink-0 shadow-[4px_4px_0_0_#999]">
                <div className="h-[6px] w-[74px] border-l-2 border-r-2 border-t-2 border-[#777] bg-[#f6f6f6]" />
                <div className="h-[6px] w-[62px] border-r-2 border-t-2 border-[#777] bg-[#f6f6f6]" />
                <div className="h-[6px] w-[67px] border-r-2 border-t-2 border-[#777] bg-[#f6f6f6]" />
                <div className="h-[6px] w-[122px] border-r-2 border-t-2 border-[#777] bg-[#f6f6f6]" />
                <div className="h-[6px] w-[57px] border-r-2 border-t-2 border-[#777] bg-[#f6f6f6]" />
                <div className="h-[6px] w-[60px] border-r-2 border-t-2 border-[#777] bg-[#f6f6f6]" />
              </div>
            </div>
          </div>
        </div>

        {/* right bar */}
        <div className="w-[30px] shrink-0 overflow-hidden">
          <HGrip c="ml-[3px] mt-[7px] w-[30px]" />
          <Sb c="ml-[7px] mt-[9px]"><Plus /></Sb>
          <Sb c="ml-[7px] mt-[9px]"><RedX /></Sb>
          <Sb c="ml-[7px] mt-[12px]"><Scissors /></Sb>
          <Sb c="ml-[7px] mt-[9px]"><CopyDocs /></Sb>
          <Sb c="ml-[7px] mt-[10px]"><PasteOff /></Sb>
          <Sb c="ml-[7px] mt-[10px]"><LinkPlusOff /></Sb>
          <Sb c="ml-[7px] mt-[9px]"><Undo /></Sb>
          <SideArrow c="ml-[6px] mt-[10px]" />
          <HGrip c="ml-[3px] mt-[14px] w-[30px]" />
          <Sb c="ml-[7px] mt-[10px]"><PersonCursorOff /></Sb>
          <Sb c="ml-[7px] mt-[9px]"><PersonCursorOff two /></Sb>
          <Sb c="ml-[7px] mt-[10px]"><PersonCursorOff hollow /></Sb>
          <Sb c="ml-[7px] mt-[11px]"><BoxCursorOff mode="down" /></Sb>
          <Sb c="ml-[7px] mt-[9px]"><BoxCursorOff mode="top" /></Sb>
          <Sb c="ml-[7px] mt-[9px]"><BoxCursorOff mode="elbow" /></Sb>
          <Sb c="ml-[7px] mt-[11px]"><StepsOff /></Sb>
          <SideArrow c="ml-[6px] mt-[9px]" />
          <HGrip c="ml-[3px] mt-[14px] w-[30px]" />
          <Sb c="ml-[7px] mt-[8px]"><BlockArrow dir="up" on /></Sb>
          <Sb c="ml-[7px] mt-[11px]"><BlockArrow dir="down" /></Sb>
          <Sb c="ml-[7px] mt-[10px]"><BlockArrow dir="left" on /></Sb>
          <Sb c="ml-[7px] mt-[11px]"><BlockArrow dir="right" on /></Sb>
          <SideArrow c="ml-[6px] mt-[8px]" />
        </div>
      </div>

      {/* status bar */}
      <div className="flex h-[27px] shrink-0 bg-[#f0f0f0] pl-[145px] pt-[3px]">
        <StatusCell c="w-[112px]" />
        <StatusCell c="ml-[5px] w-[173px]">Portfolio: All Projects</StatusCell>
        <StatusCell c="ml-[5px] w-[187px]">Access Mode: Shared</StatusCell>
        <StatusCell c="ml-[4px] w-[217px]">Data Date: 13-Jan-25</StatusCell>
        <StatusCell c="ml-[6px] w-[379px]">Baseline: Current Project</StatusCell>
        <StatusCell c="ml-[5px] w-[112px]">User: admin</StatusCell>
        <StatusCell c="ml-[5px] flex-1 border-r-0">DB: New_Connection_1 (Professional)</StatusCell>
      </div>
      <div className="flex h-[6px] shrink-0">
        <div className="w-[1578px] bg-gradient-to-r from-[#d6e4f5] to-[#dfe7f6]" />
        <div className="flex-1 bg-[#ededf2]" />
      </div>
    </div>
  )
}
